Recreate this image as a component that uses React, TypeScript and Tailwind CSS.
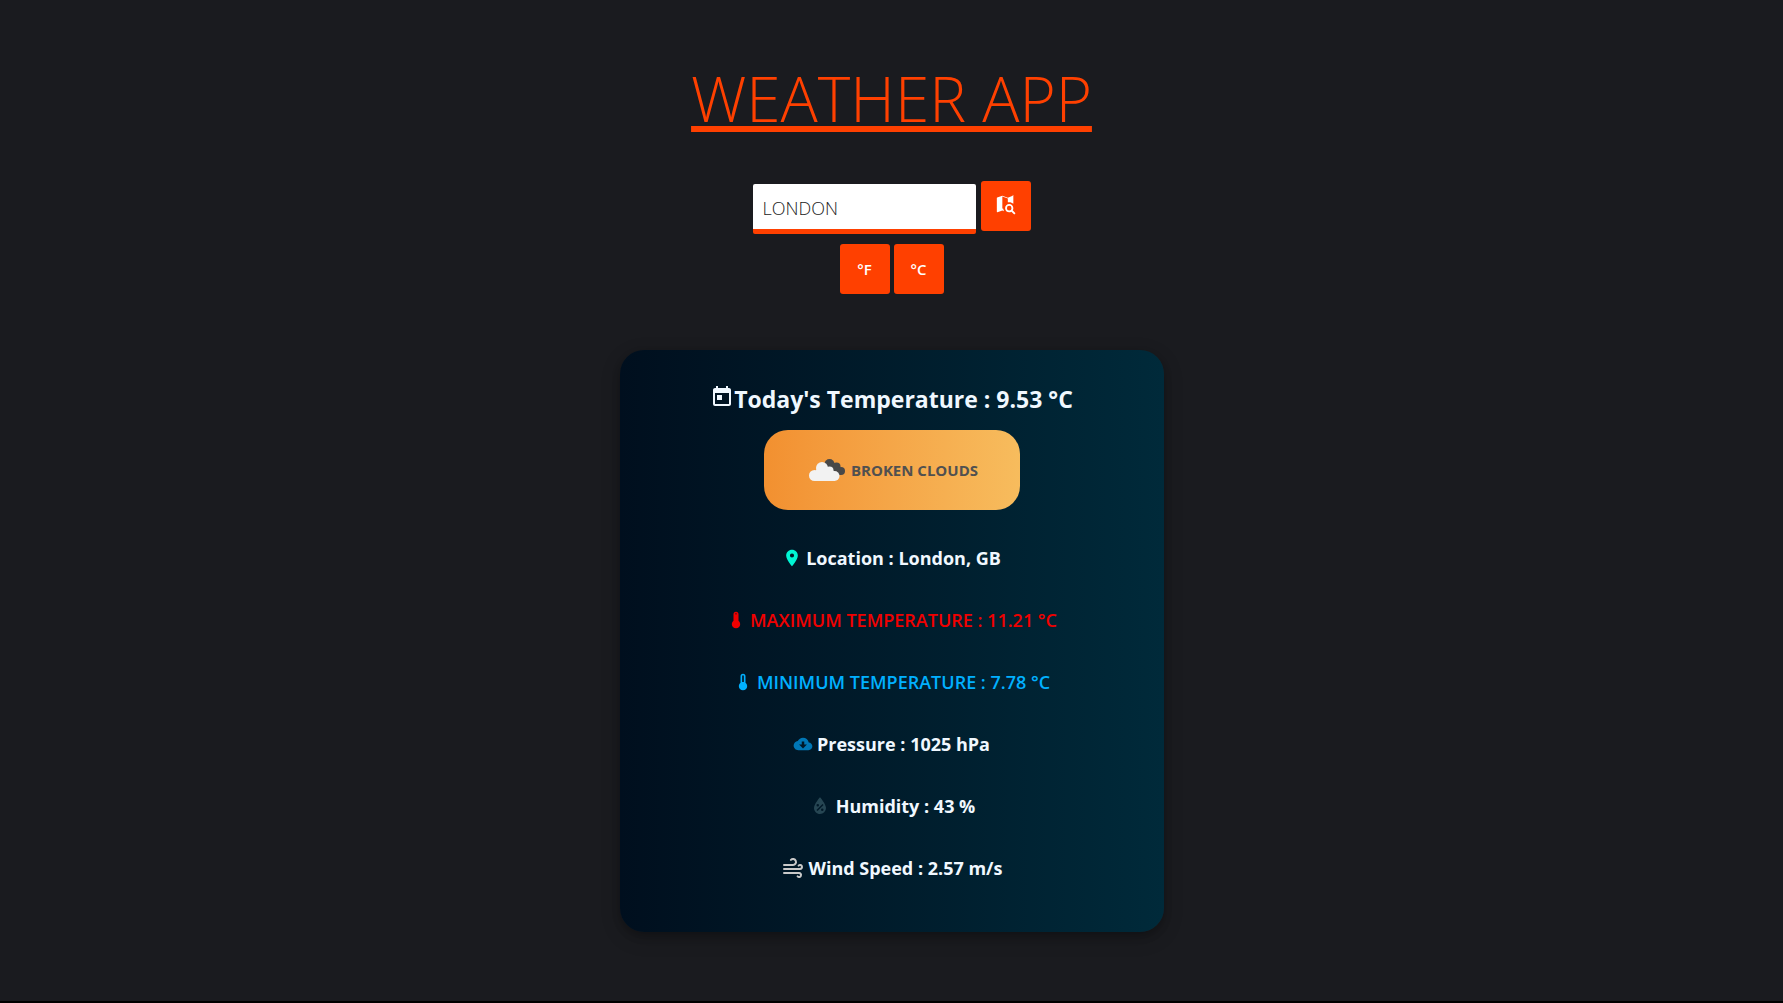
import type { ReactNode } from 'react';
import { MdToday, MdLocationOn } from 'react-icons/md';
import { IoMdCloudDownload } from 'react-icons/io';

function MapSearchIcon() {
  return (
    <svg viewBox="0 0 24 24" className="size-[22px]" fill="currentColor" aria-hidden="true">
      <path d="M15.5 12c2.5 0 4.5 2 4.5 4.5 0 .88-.25 1.71-.69 2.4l3.08 3.1L21 23.39l-3.12-3.07c-.69.43-1.51.68-2.38.68-2.5 0-4.5-2-4.5-4.5s2-4.5 4.5-4.5m0 2a2.5 2.5 0 1 0 0 5 2.5 2.5 0 0 0 0-5M19.5 2a.5.5 0 0 1 .5.5v9.31c-1.17-1.13-2.75-1.81-4.5-1.81-.51 0-1.02.06-1.5.17V5.87L8 3.77v13.13l1.04.36c.1.97.4 1.87.86 2.69L8 19l-5.34 2.03L2.5 21a.5.5 0 0 1-.5-.5V5.38c0-.23.15-.41.36-.48L8 3l6 2.1 5.34-2.07z" />
    </svg>
  );
}

function BrokenCloudsIcon() {
  return (
    <svg viewBox="0 0 36 24" className="h-6 w-9" aria-hidden="true">
      <g fill="#484848">
        <circle cx="20.5" cy="6" r="5" />
        <circle cx="27.5" cy="8.500" r="4" />
        <circle cx="32" cy="13" r="4" />
        <path d="M20 6h9l3 11h-9z" />
      </g>
      <g fill="#f2f2f2">
        <circle cx="13" cy="10" r="6" />
        <circle cx="5.500" cy="17.500" r="5.500" />
        <circle cx="20.500" cy="12.500" r="4" />
        <circle cx="25.500" cy="18" r="5" />
        <path d="M5.500 23V14L8 11h14l4 3v9z" />
      </g>
    </svg>
  );
}

function ThermometerIcon({ low, className }: { low?: boolean; className: string }) {
  return (
    <svg viewBox="0 0 24 24" className={className} fill="currentColor" aria-hidden="true">
      <path
        d={
          low
            ? 'M15 13V5a3 3 0 0 0-6 0v8a5 5 0 1 0 6 0M12 4a1 1 0 0 1 1 1v7h-2V5a1 1 0 0 1 1-1'
            : 'M15 13V5a3 3 0 0 0-6 0v8a5 5 0 1 0 6 0M12 4a1 1 0 0 1 1 1h-2a1 1 0 0 1 1-1'
        }
      />
    </svg>
  );
}

function HumidityIcon() {
  return (
    <svg viewBox="0 0 24 24" className="size-6" fill="#264653" aria-hidden="true">
      <path d="M12 3.25S6 10 6 14c0 3.32 2.69 6 6 6a6 6 0 0 0 6-6c0-4-6-10.75-6-10.75m2.47 6.72 1.06 1.06-6 6-1.06-1.06zM9.75 10A1.25 1.25 0 0 1 11 11.25a1.25 1.25 0 0 1-1.25 1.25 1.25 1.25 0 0 1-1.25-1.25A1.25 1.25 0 0 1 9.75 10m4.5 4.5a1.25 1.25 0 0 1 1.25 1.25A1.25 1.25 0 0 1 14.25 17 1.25 1.25 0 0 1 13 15.75a1.25 1.25 0 0 1 1.25-1.25" />
    </svg>
  );
}

function WindIcon() {
  return (
    <svg
      viewBox="0 0 24 24"
      className="size-6"
      fill="none"
      stroke="#c9c9c9"
      strokeWidth="2"
      strokeLinecap="round"
      aria-hidden="true"
    >
      <path d="M3 9h9a3 3 0 1 0-2.120-5.120M3 13h16a2 2 0 1 0-1.410-3.410M3 17h15a2 2 0 1 1-1.410 3.410" />
    </svg>
  );
}

function Row({ icon, children }: { icon: ReactNode; children: ReactNode }) {
  return (
    <li className="flex h-6 items-center justify-center gap-1 whitespace-nowrap">
      {icon}
      {children}
    </li>
  );
}

const button =
  'flex size-[50px] items-center justify-center rounded-[3px] bg-[#ff4000] text-[15px] font-semibold text-white';

export default function App() {
  return (
    <div className="flex min-h-screen flex-col items-center border-b-2 border-black bg-[#1a1b1f] px-4 pb-[69px] pt-[54px] font-['Open_Sans','Noto_Sans',sans-serif] text-[aliceblue]">
      <h1 className="text-[62px] font-light leading-[88px] text-[#ff4000] underline decoration-[6px] underline-offset-4">
        WEATHER APP
      </h1>
      <form className="mt-[39px] flex flex-col items-center" onSubmit={(e) => e.preventDefault()}>
        <div className="flex gap-[5px]">
          <input
            type="text"
            aria-label="City"
            defaultValue="LONDON"
            className="mt-[3px] h-[50px] w-[223px] rounded-[2px] border-b-[5px] border-[#ff4000] bg-white px-2.5 pt-0.5 text-lg font-light text-[#222] outline-none"
          />
          <button type="submit" aria-label="Search" className={button + ' pb-1'}>
            <MapSearchIcon />
          </button>
        </div>
        <div className="mt-2.5 flex gap-1">
          <button type="button" className={button}>°F</button>
          <button type="button" className={button}>°C</button>
        </div>
      </form>
      <main className="mt-14 flex w-full max-w-[544px] flex-col items-center rounded-3xl bg-linear-to-r from-[#000f1e] to-[#002a3a] pb-[52px] pt-[31px] shadow-[0_4px_8px_0_rgba(0,0,0,0.2),0_6px_20px_0_rgba(0,0,0,0.19)]">
        <h2 className="flex h-9 items-center text-[23px] font-bold">
          <MdToday className="mb-1 size-6" />
          Today's Temperature : 9.53 °C
        </h2>
        <div className="mt-[13px] flex h-20 w-64 items-center justify-center gap-1.5 rounded-3xl bg-linear-to-r from-[#f29030] to-[#f7bc5d] pl-1 text-[15px] font-bold text-[#505050]">
          <BrokenCloudsIcon />
          BROKEN CLOUDS
        </div>
        <ul className="mt-9 flex flex-col gap-[38px] text-lg font-bold">
          <Row icon={<MdLocationOn className="size-5 text-[#00f5d4]" />}>Location : London, GB</Row>
          <Row icon={<ThermometerIcon className="size-5 text-[#f00000]" />}>
            <span className="font-semibold text-[#f00000]">MAXIMUM TEMPERATURE : 11.21 °C</span>
          </Row>
          <Row icon={<ThermometerIcon low className="size-5 text-[#00b0ff]" />}>
            <span className="font-semibold text-[#00b0ff]">MINIMUM TEMPERATURE : 7.78 °C</span>
          </Row>
          <Row icon={<IoMdCloudDownload className="size-5 text-[#0077b6]" />}>Pressure : 1025 hPa</Row>
          <Row icon={<HumidityIcon />}>Humidity : 43 %</Row>
          <Row icon={<WindIcon />}>Wind Speed : 2.57 m/s</Row>
        </ul>
      </main>
    </div>
  );
}
